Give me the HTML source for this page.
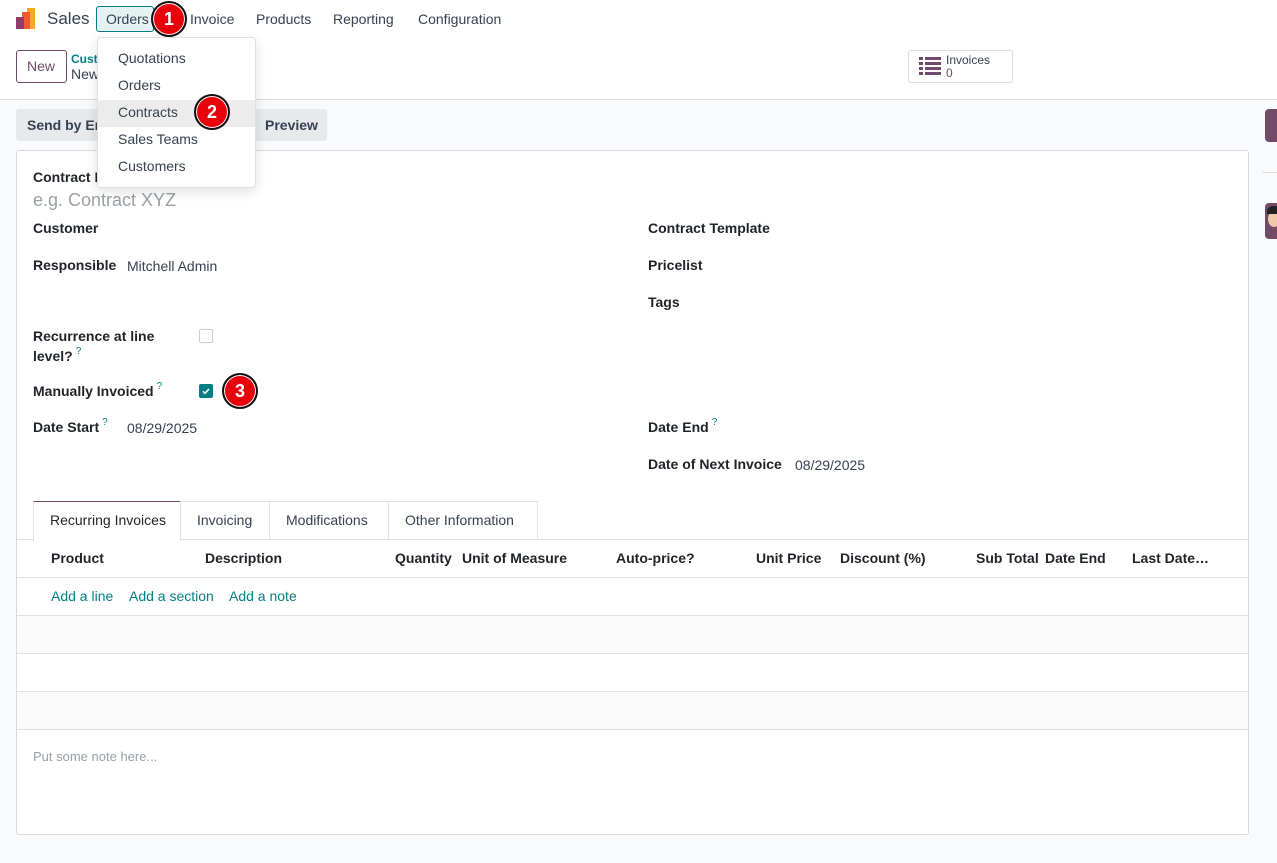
<!DOCTYPE html>
<html><head><meta charset="utf-8"><style>
*{box-sizing:border-box;margin:0;padding:0}
body{width:1277px;height:863px;overflow:hidden;background:#f9fafb;font-family:"Liberation Sans","DejaVu Sans",sans-serif;font-size:14px;color:#374151;position:relative}
.a{position:absolute;white-space:nowrap;line-height:18px}
.b{font-weight:bold;color:#1f2328}
.teal{color:#017e84}
.badge{position:absolute;width:36px;height:36px;border-radius:50%;background:#e8000b;border:2px solid #111;box-shadow:0 0 0 1px #fff inset;color:#fff;font-weight:bold;font-size:18px;text-align:center;line-height:32px}
sup{color:#017e84;font-size:10px;font-weight:normal;margin-left:3px;vertical-align:baseline;position:relative;top:-7px;line-height:0}
</style></head><body>
<div style="position:absolute;left:0;top:0;width:1277px;height:100px;background:#fff;border-bottom:1px solid #d8dadd"></div>
<svg style="position:absolute;left:15px;top:8px" width="22" height="22" viewBox="0 0 22 22"><rect x="12" y="0" width="8" height="21" fill="#f9a825"/><rect x="7" y="4" width="8" height="17" fill="#f05a30"/><rect x="1" y="9" width="8" height="12" fill="#8f3c6a"/></svg>
<div class="a" style="left:47px;top:8px;font-size:17px;line-height:22px;color:#374151">Sales</div>
<div style="position:absolute;left:96px;top:6px;width:58px;height:26px;border:1px solid #017e84;background:#e5f2f2;border-radius:3px"></div>
<div class="a" style="left:106px;top:10px">Orders</div>
<div class="a" style="left:190px;top:10px">Invoice</div>
<div class="a" style="left:256px;top:10px">Products</div>
<div class="a" style="left:333px;top:10px">Reporting</div>
<div class="a" style="left:418px;top:10px">Configuration</div>
<div class="badge" style="left:151px;top:1px">1</div>
<div style="position:absolute;left:16px;top:50px;width:51px;height:33px;border:1px solid #714b67;border-radius:3px;background:#fff"></div>
<div class="a" style="left:27px;top:57px;color:#714b67">New</div>
<div class="a teal" style="left:71px;top:50px;font-size:12px;font-weight:bold">Cust</div>
<div class="a" style="left:71px;top:65px">New</div>
<div style="position:absolute;left:908px;top:50px;width:105px;height:33px;border:1px solid #d8dadd;border-radius:3px;background:#fff"></div>
<svg style="position:absolute;left:919px;top:57px" width="22" height="18" viewBox="0 0 22 18" fill="#714b67"><rect x="0" y="0" width="4" height="3"/><rect x="6" y="0" width="16" height="3"/><rect x="0" y="5" width="4" height="3"/><rect x="6" y="5" width="16" height="3"/><rect x="0" y="10" width="4" height="3"/><rect x="6" y="10" width="16" height="3"/><rect x="0" y="15" width="4" height="3"/><rect x="6" y="15" width="16" height="3"/></svg>
<div class="a" style="left:946px;top:53px;font-size:12px;line-height:14px">Invoices</div>
<div class="a" style="left:946px;top:66px;font-size:12px;line-height:14px;color:#714b67">0</div>
<div style="position:absolute;left:16px;top:109px;width:311px;height:32px;background:#e7e9ed;border-radius:3px"></div>
<div class="a b" style="left:27px;top:116px;color:#374151">Send by Em</div>
<div class="a b" style="left:265px;top:116px;color:#374151">Preview</div>
<div style="position:absolute;left:1265px;top:109px;width:20px;height:33px;background:#714b67;border-radius:4px"></div>
<div style="position:absolute;left:1262px;top:172px;width:15px;height:1px;background:#ddd"></div>
<div style="position:absolute;left:1265px;top:203px;width:20px;height:36px;background:#714b67;border-radius:4px;overflow:hidden"><div style="position:absolute;left:3px;top:8px;width:12px;height:16px;background:#f2c9a8;border-radius:50%"></div><div style="position:absolute;left:2px;top:3px;width:14px;height:8px;background:#222;border-radius:6px 6px 0 0"></div></div>
<div style="position:absolute;left:16px;top:150px;width:1233px;height:685px;background:#fff;border:1px solid #d8dadd;border-radius:3px"></div>
<div class="a b" style="left:33px;top:168px">Contract Name</div>
<div class="a" style="left:33px;top:189px;font-size:18px;line-height:22px;color:#9aa0a6">e.g. Contract XYZ</div>
<div class="a b" style="left:33px;top:219px">Customer</div>
<div class="a b" style="left:33px;top:256px">Responsible</div>
<div class="a" style="left:127px;top:257px">Mitchell Admin</div>
<div class="a b" style="left:33px;top:327px">Recurrence at line</div>
<div class="a b" style="left:33px;top:347px">level?<sup>?</sup></div>
<div style="position:absolute;left:199px;top:329px;width:14px;height:14px;border:1px solid #ccc;border-radius:2px"></div>
<div class="a b" style="left:33px;top:382px">Manually Invoiced<sup>?</sup></div>
<div style="position:absolute;left:199px;top:384px;width:14px;height:14px;background:#017e84;border-radius:2px"><svg width="14" height="14" viewBox="0 0 14 14"><path d="M4 7.3l2 2 4-4.3" stroke="#fff" stroke-width="1.6" fill="none"/></svg></div>
<div class="badge" style="left:222px;top:373px">3</div>
<div class="a b" style="left:33px;top:418px">Date Start<sup>?</sup></div>
<div class="a" style="left:127px;top:419px">08/29/2025</div>
<div class="a b" style="left:648px;top:219px">Contract Template</div>
<div class="a b" style="left:648px;top:256px">Pricelist</div>
<div class="a b" style="left:648px;top:293px">Tags</div>
<div class="a b" style="left:648px;top:418px">Date End<sup>?</sup></div>
<div class="a b" style="left:648px;top:455px">Date of Next Invoice</div>
<div class="a" style="left:795px;top:456px">08/29/2025</div>
<div style="position:absolute;left:17px;top:539px;width:1231px;height:1px;background:#dee2e6"></div>
<div style="position:absolute;left:33px;top:501px;width:148px;height:40px;background:#fff;border:1px solid #dee2e6;border-top-color:#714b67;border-bottom:none"></div>
<div style="position:absolute;left:180px;top:501px;width:358px;height:39px;border:1px solid #dee2e6;border-bottom:none"></div>
<div style="position:absolute;left:269px;top:501px;width:1px;height:39px;background:#dee2e6"></div>
<div style="position:absolute;left:388px;top:501px;width:1px;height:39px;background:#dee2e6"></div>
<div class="a" style="left:50px;top:511px;color:#1f2328">Recurring Invoices</div>
<div class="a" style="left:197px;top:511px">Invoicing</div>
<div class="a" style="left:286px;top:511px">Modifications</div>
<div class="a" style="left:405px;top:511px">Other Information</div>
<div style="position:absolute;left:17px;top:616px;width:1231px;height:38px;background:#fafafa"></div>
<div style="position:absolute;left:17px;top:692px;width:1231px;height:38px;background:#fafafa"></div>
<div style="position:absolute;left:17px;top:577px;width:1231px;height:1px;background:#dee2e6"></div>
<div style="position:absolute;left:17px;top:615px;width:1231px;height:1px;background:#dee2e6"></div>
<div style="position:absolute;left:17px;top:653px;width:1231px;height:1px;background:#dee2e6"></div>
<div style="position:absolute;left:17px;top:691px;width:1231px;height:1px;background:#dee2e6"></div>
<div style="position:absolute;left:17px;top:729px;width:1231px;height:1px;background:#dee2e6"></div>
<div class="a b" style="left:51px;top:549px">Product</div>
<div class="a b" style="left:205px;top:549px">Description</div>
<div class="a b" style="left:395px;top:549px">Quantity</div>
<div class="a b" style="left:462px;top:549px">Unit of Measure</div>
<div class="a b" style="left:616px;top:549px">Auto-price?</div>
<div class="a b" style="left:756px;top:549px">Unit Price</div>
<div class="a b" style="left:840px;top:549px">Discount (%)</div>
<div class="a b" style="left:976px;top:549px">Sub Total</div>
<div class="a b" style="left:1045px;top:549px">Date End</div>
<div class="a b" style="left:1132px;top:549px">Last Date…</div>
<div class="a teal" style="left:51px;top:587px">Add a line</div>
<div class="a teal" style="left:129px;top:587px">Add a section</div>
<div class="a teal" style="left:229px;top:587px">Add a note</div>
<div class="a" style="left:33px;top:748px;color:#9aa0a6;font-size:13px">Put some note here...</div>
<div style="position:absolute;left:97px;top:37px;width:159px;height:151px;background:#fff;border:1px solid #e0e0e0;border-radius:4px;box-shadow:0 4px 12px rgba(0,0,0,.12)">
<div style="position:absolute;left:0;right:0;top:62px;height:27px;background:#ececec"></div>
</div>
<div class="a" style="left:118px;top:49px">Quotations</div>
<div class="a" style="left:118px;top:76px">Orders</div>
<div class="a" style="left:118px;top:103px">Contracts</div>
<div class="a" style="left:118px;top:130px">Sales Teams</div>
<div class="a" style="left:118px;top:157px">Customers</div>
<div class="badge" style="left:194px;top:94px">2</div>
</body></html>
